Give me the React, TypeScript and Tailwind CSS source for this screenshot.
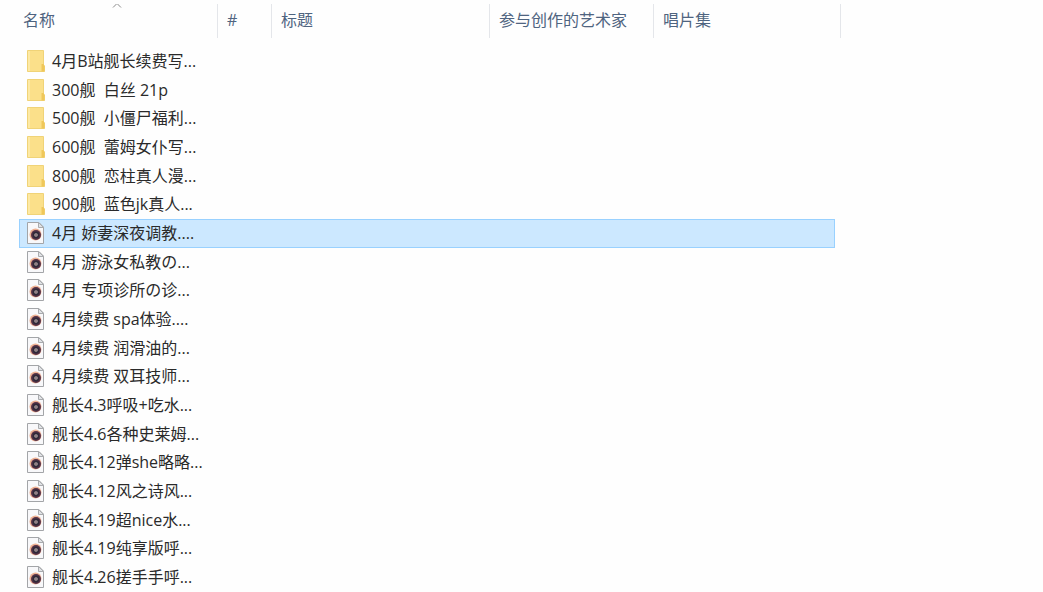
import { useState } from "react";

interface FileEntry {
  name: string;
  type: "folder" | "audio";
}

interface Column {
  label: string;
  sorted?: boolean;
}

const columns: Column[] = [
  { label: "名称", sorted: true },
  { label: "#" },
  { label: "标题" },
  { label: "参与创作的艺术家" },
];

const files: FileEntry[] = [
  { name: "4月B站舰长续费写...", type: "folder" },
  { name: "300舰  白丝 21p", type: "folder" },
  { name: "500舰  小僵尸福利...", type: "folder" },
  { name: "600舰  蕾姆女仆写...", type: "folder" },
  { name: "800舰  恋柱真人漫...", type: "folder" },
  { name: "900舰  蓝色jk真人...", type: "folder" },
  { name: "4月 娇妻深夜调教....", type: "audio" },
  { name: "4月 游泳女私教の...", type: "audio" },
  { name: "4月 专项诊所の诊...", type: "audio" },
  { name: "4月续费 spa体验....", type: "audio" },
  { name: "4月续费 润滑油的...", type: "audio" },
  { name: "4月续费 双耳技师...", type: "audio" },
  { name: "舰长4.3呼吸+吃水...", type: "audio" },
  { name: "舰长4.6各种史莱姆...", type: "audio" },
  { name: "舰长4.12弹she略略...", type: "audio" },
  { name: "舰长4.12风之诗风...", type: "audio" },
  { name: "舰长4.19超nice水...", type: "audio" },
  { name: "舰长4.19纯享版呼...", type: "audio" },
  { name: "舰长4.26搓手手呼...", type: "audio" },
];

function FolderIcon() {
  return (
    <svg width="18" height="22" viewBox="0 0 18 22" className="shrink-0" aria-hidden="true">
      <path d="M0.5 0.5H16.5V15L17.5 16V21.5H0.5Z" fill="#fbe08a" stroke="#f0d377" />
      <path d="M1 1H3V21H1Z" fill="#fde9a4" />
      <path d="M14.5 14H16.5L17.5 16V21.5H14.5Z" fill="#efc75a" />
    </svg>
  );
}

function AudioIcon() {
  return (
    <svg width="18" height="22" viewBox="0 0 18 22" className="shrink-0" aria-hidden="true">
      <path d="M0.5 0.5H12L16.5 5V21.5H0.5Z" fill="#f8f8fa" stroke="#a3a5a8" />
      <path d="M11.5 0.5V5.5H16.5Z" fill="#e1e3e6" stroke="#a9abae" />
      <circle cx="8.5" cy="12.5" r="6" fill="#eeb193" />
      <circle cx="9" cy="13" r="5" fill="#563247" />
      <circle cx="9" cy="13" r="3.4" fill="#2f2938" />
      <circle cx="9" cy="13" r="1.8" fill="#b3a3a3" />
      <circle cx="9" cy="13" r="0.7" fill="#59414f" />
    </svg>
  );
}

function SortArrow() {
  return (
    <svg width="10" height="4" viewBox="0 0 10 4" className="absolute left-[93px] top-0" aria-hidden="true">
      <path d="M1 3.5L5 -0.5L9 3.5" fill="none" stroke="#8a8a8a" />
    </svg>
  );
}

export default function App() {
  const [selected, setSelected] = useState(6);

  return (
    <div className="min-h-screen bg-[#fefefe] pl-[19px] pt-1 font-['Open_Sans','Noto_Sans_CJK_SC',sans-serif] text-base leading-6 text-[#2a2a2a]">
      <table className="w-full table-fixed border-separate border-spacing-0">
        <colgroup>
          <col className="w-[199px]" />
          <col className="w-[54px]" />
          <col className="w-[218px]" />
          <col className="w-[164px]" />
          <col className="w-[181px]" />
          <col className="w-[6px]" />
          <col />
        </colgroup>
        <thead>
          <tr className="h-[34px] text-[#4f6480]">
            {columns.map((column, index) => (
              <th
                key={column.label}
                scope="col"
                aria-sort={column.sorted ? "ascending" : undefined}
                className={`relative border-r border-[#e4e6ea] p-0 pb-[2px] text-left font-normal ${
                  index === 0 ? "pl-1" : "pl-[9px]"
                }`}
              >
                {column.sorted && <SortArrow />}
                <button type="button" className="block whitespace-nowrap">
                  {column.label}
                </button>
              </th>
            ))}
            <th scope="col" colSpan={2} className="border-r border-[#e4e6ea] p-0 pb-[2px] pl-[9px] text-left font-normal">
              <button type="button" className="block whitespace-nowrap">
                唱片集
              </button>
            </th>
            <td />
          </tr>
          <tr className="h-[9px]">
            <td colSpan={7} className="p-0" />
          </tr>
        </thead>
        <tbody>
          {files.map((file, index) => {
            const cell =
              index === selected
                ? "border-y border-[#99d1ff] bg-[#cce8ff] p-0"
                : "border-y border-transparent p-0";
            return (
              <tr
                key={file.name}
                aria-selected={index === selected}
                onClick={() => setSelected(index)}
                className="h-[29px] nth-[3n]:h-[28px]"
              >
                <td className={`${cell} border-l pb-[2px] pl-[7px]`}>
                  <div className="flex items-center gap-[7px] whitespace-pre">
                    {file.type === "folder" ? <FolderIcon /> : <AudioIcon />}
                    <span>{file.name}</span>
                  </div>
                </td>
                <td className={cell} />
                <td className={cell} />
                <td className={cell} />
                <td className={`${cell} border-r`} />
                <td />
                <td />
              </tr>
            );
          })}
        </tbody>
      </table>
    </div>
  );
}
